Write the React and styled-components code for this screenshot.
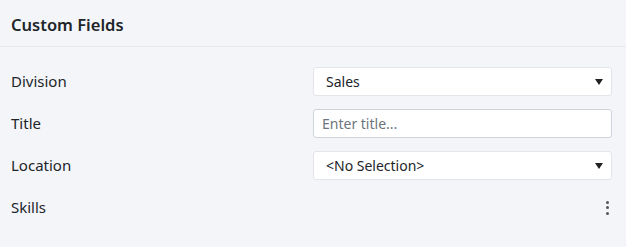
import styled, { createGlobalStyle } from 'styled-components'

const GlobalStyle = createGlobalStyle`
  html, body {
    margin: 0;
    padding: 0;
    background: #f4f5f9;
  }
  body {
    font-family: "Noto Sans", "Open Sans", "Liberation Sans", sans-serif;
    color: #212529;
  }
`

const Panel = styled.section`
  width: 626px;
  height: 247px;
  background: #f4f5f9;
`

const Header = styled.header`
  height: 47px;
  box-sizing: border-box;
  padding: 3px 11px 0;
  display: flex;
  align-items: center;
  border-bottom: 1px solid #e6e8ee;
`

const Title = styled.h2`
  margin: 0;
  font-size: 16.5px;
  font-weight: 600;
  color: #212529;
`

const Body = styled.div`
  padding: 20px 14px 0 11px;
  display: flex;
  flex-direction: column;
  gap: 13px;
`

const Row = styled.div`
  display: flex;
  align-items: center;
  min-height: 29px;
`

const Label = styled.label`
  flex: 0 0 302px;
  font-size: 15px;
  color: #212529;
  margin-top: -2px;
`

const Field = styled.div`
  flex: 1;
  display: flex;
  justify-content: ${p => (p.$end ? 'flex-end' : 'stretch')};
`

const Select = styled.div`
  flex: 1;
  height: 29px;
  box-sizing: border-box;
  background: #fff;
  border: 1px solid #e3e5ea;
  border-radius: 3px;
  display: flex;
  align-items: center;
  justify-content: space-between;
  padding: 0 8px 0 12px;
  font-size: 14px;
  color: #212529;
`

const Caret = styled.span`
  width: 0;
  height: 0;
  border-left: 4.5px solid transparent;
  border-right: 4.5px solid transparent;
  border-top: 6px solid #222;
`

const Input = styled.input`
  flex: 1;
  height: 29px;
  box-sizing: border-box;
  background: #fff;
  border: 1px solid #cfd3da;
  border-radius: 3px;
  padding: 0 8px;
  font-family: inherit;
  font-size: 14px;
  color: #212529;
  outline: none;

  &::placeholder {
    color: #6c757d;
  }
`

const Kebab = styled.button`
  background: none;
  border: none;
  padding: 0;
  margin-right: 3px;
  display: flex;
  flex-direction: column;
  gap: 2.5px;
  cursor: pointer;
`

const Dot = styled.span`
  width: 3px;
  height: 3px;
  border-radius: 50%;
  background: #555;
`

export default function App() {
  return (
    <Panel>
      <GlobalStyle />
      <Header>
        <Title>Custom Fields</Title>
      </Header>
      <Body>
        <Row>
          <Label>Division</Label>
          <Field>
            <Select>
              <span>Sales</span>
              <Caret />
            </Select>
          </Field>
        </Row>
        <Row>
          <Label>Title</Label>
          <Field>
            <Input placeholder="Enter title..." />
          </Field>
        </Row>
        <Row>
          <Label>Location</Label>
          <Field>
            <Select>
              <span>&lt;No Selection&gt;</span>
              <Caret />
            </Select>
          </Field>
        </Row>
        <Row>
          <Label>Skills</Label>
          <Field $end>
            <Kebab aria-label="More">
              <Dot />
              <Dot />
              <Dot />
            </Kebab>
          </Field>
        </Row>
      </Body>
    </Panel>
  )
}
